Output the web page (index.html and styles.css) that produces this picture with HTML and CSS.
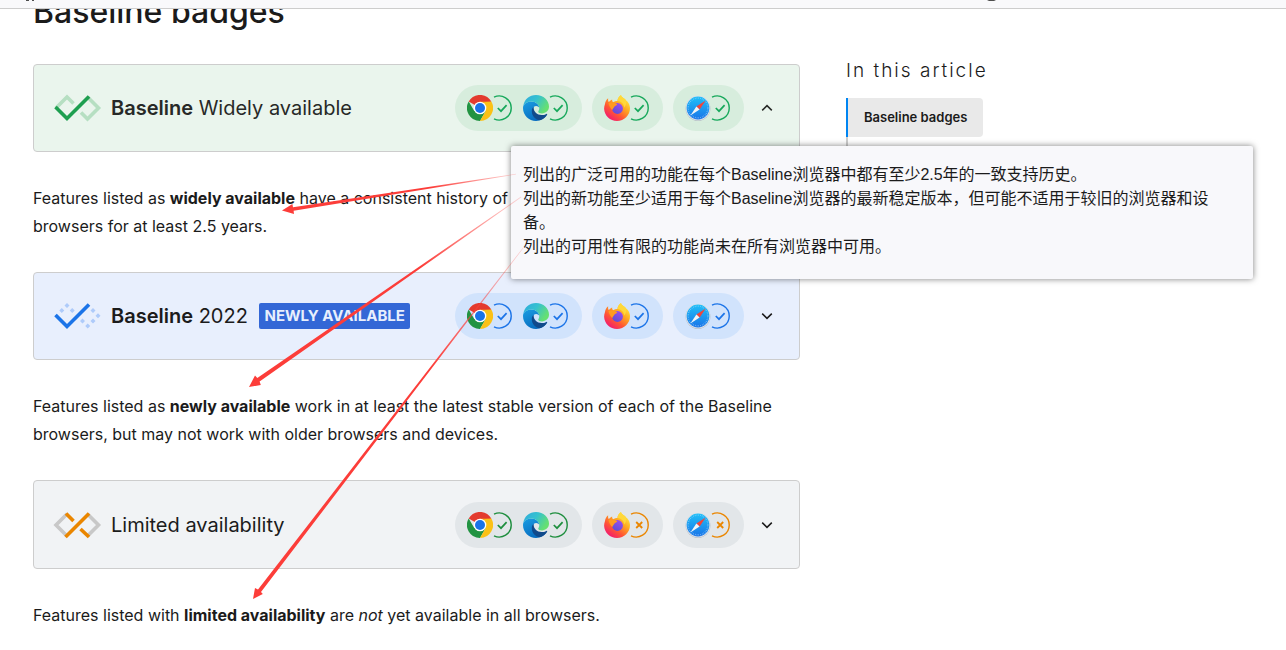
FILE: index.html
```html
<!DOCTYPE html>
<html lang="en">
<head>
    <meta charset="UTF-8">
    <meta name="viewport" content="width=device-width, initial-scale=1.0">
    <title>Baseline badges</title>
    <link rel="stylesheet" href="styles.css">
</head>
<body>
    <svg class="sprite" aria-hidden="true">
        <defs>
            <linearGradient id="edgeTop" x1="0" y1="0" x2="1" y2="0.5">
                <stop offset="0" stop-color="#2faadd"/>
                <stop offset="0.5" stop-color="#35c1d0"/>
                <stop offset="1" stop-color="#66e071"/>
            </linearGradient>
            <linearGradient id="edgeLeft" x1="0" y1="0" x2="0.6" y2="1">
                <stop offset="0" stop-color="#1b9de2"/>
                <stop offset="1" stop-color="#0669bd"/>
            </linearGradient>
            <linearGradient id="foxBody" x1="0.9" y1="0.1" x2="0.2" y2="1">
                <stop offset="0" stop-color="#fff044"/>
                <stop offset="0.35" stop-color="#ffa820"/>
                <stop offset="0.65" stop-color="#ff5634"/>
                <stop offset="1" stop-color="#f0117a"/>
            </linearGradient>
            <linearGradient id="foxGlobe" x1="0.8" y1="0" x2="0.2" y2="1">
                <stop offset="0" stop-color="#a04cf0"/>
                <stop offset="1" stop-color="#5a4fd0"/>
            </linearGradient>
            <linearGradient id="safariDial" x1="0" y1="0" x2="0" y2="1">
                <stop offset="0" stop-color="#1fc0f8"/>
                <stop offset="1" stop-color="#1a74e8"/>
            </linearGradient>
        </defs>

        <symbol id="chrome" viewBox="0 0 26 26">
            <path fill="#e33b2e" d="M13 13 L1.7 6.5 A13 13 0 0 1 24.3 6.5 Z"/>
            <path fill="#229342" d="M13 26 A13 13 0 0 1 1.7 6.5 L7.4 16.2 L13 13 L18.6 16.2 Z"/>
            <path fill="#fbc116" d="M18.6 16.2 L13 26 A13 13 0 0 0 24.3 6.5 H13 Z"/>
            <path fill="#e33b2e" d="M13 6.5 H24.3 L13 7.4 Z"/>
            <circle cx="13" cy="13" r="6.3" fill="#fff"/>
            <circle cx="13" cy="13" r="5" fill="#1a73e8"/>
        </symbol>

        <symbol id="edge" viewBox="0 0 26 26">
            <path fill="url(#edgeLeft)" d="M0 13 C0 9.3 4 6.6 8.4 6.6 C12.8 6.6 16.3 9.6 16.3 13 C15.4 11.2 13 10.4 10.9 11.8 C10 14 10 17 12.5 19.5 C16 22.4 20 22 24 19 C22.5 23 18 26 13 26 C5.8 26 0 20.2 0 13 Z"/>
            <path fill="#114a8b" d="M10.5 12.1 C9.3 13.1 8.8 14.5 8.8 16 C8.8 21.8 13.5 25.6 17.8 25 C20.5 24 23 21.6 24.2 19.4 C24.4 18.9 23.9 18.7 23.5 18.9 C17 22.2 10.4 18.4 10.5 12.1 Z"/>
            <path fill="url(#edgeTop)" d="M0.3 11 C1.2 4.4 6.5 0 13 0 C20.6 0 26 5.5 26 11.6 C26 16 22.6 18.4 19 18.4 C16.5 18.4 15.2 17.5 15.2 16.7 C15.2 16 16.3 15.2 16.3 13 C16.3 9.6 12.8 6.6 8.4 6.6 C4.8 6.6 1.8 8.3 0.3 11 Z"/>
        </symbol>

        <symbol id="firefox" viewBox="0 0 26 26">
            <path fill="url(#foxBody)" d="M24.9 8.8 C24.3 7.4 23.1 5.9 22.1 5.4 C21 3.5 17.5 2.6 17 0 C14.8 1.3 13.5 3.8 13.5 6 C12 6 10.4 6.5 9.3 7.3 C8.3 6.7 8 5.3 8.2 4.4 C6.8 5.1 5.5 6.1 4.8 7 C4 6.2 4 4.2 4.2 3.3 C2.4 4.5 1.3 6.8 1 9 C0.4 10.5 0.1 12.4 0.1 13.8 C0.4 20.7 6.1 26 13 26 C20.2 26 26 20.3 26 13.3 C26 11.8 25.5 10 24.9 8.8 Z"/>
            <circle cx="13.5" cy="13.5" r="5.4" fill="url(#foxGlobe)"/>
            <path fill="#ff9b20" d="M4.5 8 C6.4 6.9 8.2 7 9.5 7.6 C11.1 7.9 11.7 8.9 13.3 9.2 C13 10.7 11.1 10.6 10.5 11.4 C10 12.6 9.1 13.2 8.1 14.9 C6.3 13.1 5 10.9 4.5 8 Z"/>
            <path fill="#ffd83a" d="M17 0 C14.8 1.3 13.5 3.8 13.5 6 C17 6.2 20 8.8 20.2 12.4 C22.3 10.2 22.4 7.6 22.1 5.4 C21 3.5 17.5 2.6 17 0 Z"/>
        </symbol>

        <symbol id="safari" viewBox="0 0 26 26">
            <circle cx="13" cy="13.4" r="12.4" fill="#b4bbc4"/>
            <circle cx="13" cy="13" r="12.2" fill="#e0e5ec"/>
            <circle cx="13" cy="13" r="11.4" fill="url(#safariDial)"/>
            <circle cx="13" cy="13" r="9.9" fill="none" stroke="#9fd3fa" stroke-width="1.2" stroke-dasharray="0.5 1.3"/>
            <path fill="#f0453c" d="M20.7 5.6 L11.4 11.4 L14.6 14.6 Z"/>
            <path fill="#f2f4f7" d="M5.4 20.5 L11.4 11.4 L14.6 14.6 Z"/>
        </symbol>

        <symbol id="yes" viewBox="0 0 21 26">
            <path fill="none" stroke="currentColor" stroke-width="1.4" d="M1 2.2 A12 12 0 1 1 1 23.8"/>
            <path fill="none" stroke="currentColor" stroke-width="1.7" d="M4.8 13 L8 16.2 L13.6 10.2"/>
        </symbol>

        <symbol id="no" viewBox="0 0 21 26">
            <path fill="none" stroke="currentColor" stroke-width="1.4" d="M1 2.2 A12 12 0 1 1 1 23.8"/>
            <path fill="none" stroke="currentColor" stroke-width="1.8" d="M6.2 10 L12.2 16 M12.2 10 L6.2 16"/>
        </symbol>

        <symbol id="chevron" viewBox="0 0 12 12">
            <path fill="none" stroke="currentColor" stroke-width="1.5" d="M1.2 3.6 L6 8.4 L10.8 3.6"/>
        </symbol>
    </svg>

    <header class="topbar">
        <svg width="1000" height="2" aria-hidden="true">
            <path d="M26 0 h3 v1 h-3z M32 0 h2 v1 h-2z M987 0 h9 l-2 1 h-5z"/>
        </svg>
    </header>

    <div class="page">
        <main class="article">
            <h2>Baseline badges</h2>

            <section class="badge high">
                <svg class="mark" viewBox="0 0 46 26" aria-hidden="true">
                    <path class="soft" d="M2 13 L13 2 L19.5 8.5 M27 17.5 L33.5 24 L44.5 13 L33.5 2"/>
                    <path class="strong" d="M1.5 12 L13 23.5 L35 1.5"/>
                </svg>
                <h3><strong>Baseline</strong> Widely available</h3>
                <div class="browsers">
                    <span class="pill">
                        <span class="browser"><svg class="logo"><use href="#chrome"/></svg><svg class="state"><use href="#yes"/></svg></span>
                        <span class="browser"><svg class="logo"><use href="#edge"/></svg><svg class="state"><use href="#yes"/></svg></span>
                    </span>
                    <span class="pill">
                        <span class="browser"><svg class="logo"><use href="#firefox"/></svg><svg class="state"><use href="#yes"/></svg></span>
                    </span>
                    <span class="pill">
                        <span class="browser"><svg class="logo"><use href="#safari"/></svg><svg class="state"><use href="#yes"/></svg></span>
                    </span>
                </div>
                <button class="toggle open" type="button" aria-label="Collapse"><svg><use href="#chevron"/></svg></button>
            </section>
            <p>Features listed as <strong>widely available</strong> have a consistent history of support in each of the Baseline browsers for at least 2.5 years.</p>

            <section class="badge new">
                <svg class="mark" viewBox="0 0 46 26" aria-hidden="true">
                    <path class="dots" d="M13 0 l2.5 2.5 -2.5 2.5 -2.5 -2.5z M7.8 5 l2.5 2.5 -2.5 2.5 -2.5 -2.5z M18.2 5 l2.5 2.5 -2.5 2.5 -2.5 -2.5z M39 5 l2.5 2.5 -2.5 2.5 -2.5 -2.5z M44 10.2 l2.5 2.5 -2.5 2.5 -2.5 -2.5z M39 15.4 l2.5 2.5 -2.5 2.5 -2.5 -2.5z M28.5 15.4 l2.5 2.5 -2.5 2.5 -2.5 -2.5z M33.7 20.6 l2.5 2.5 -2.5 2.5 -2.5 -2.5z"/>
                    <path class="strong" d="M1.5 12 L13 23.5 L35 1.5"/>
                </svg>
                <h3><strong>Baseline</strong> 2022 <span class="tag">Newly available</span></h3>
                <div class="browsers">
                    <span class="pill">
                        <span class="browser"><svg class="logo"><use href="#chrome"/></svg><svg class="state"><use href="#yes"/></svg></span>
                        <span class="browser"><svg class="logo"><use href="#edge"/></svg><svg class="state"><use href="#yes"/></svg></span>
                    </span>
                    <span class="pill">
                        <span class="browser"><svg class="logo"><use href="#firefox"/></svg><svg class="state"><use href="#yes"/></svg></span>
                    </span>
                    <span class="pill">
                        <span class="browser"><svg class="logo"><use href="#safari"/></svg><svg class="state"><use href="#yes"/></svg></span>
                    </span>
                </div>
                <button class="toggle" type="button" aria-label="Expand"><svg><use href="#chevron"/></svg></button>
            </section>
            <p>Features listed as <strong>newly available</strong> work in at least the latest stable version of each of the Baseline browsers, but may not work with older browsers and devices.</p>

            <section class="badge limited">
                <svg class="mark" viewBox="0 0 46 26" aria-hidden="true">
                    <path class="soft" d="M13 2 L2 13 L13 24 M33.5 2 L44.5 13 L33.5 24"/>
                    <path class="strong" d="M12 1.5 L19.5 9 M26.5 17 L35 25 M11.5 25 L35 1.5"/>
                </svg>
                <h3>Limited availability</h3>
                <div class="browsers">
                    <span class="pill">
                        <span class="browser"><svg class="logo"><use href="#chrome"/></svg><svg class="state"><use href="#yes"/></svg></span>
                        <span class="browser"><svg class="logo"><use href="#edge"/></svg><svg class="state"><use href="#yes"/></svg></span>
                    </span>
                    <span class="pill">
                        <span class="browser"><svg class="logo"><use href="#firefox"/></svg><svg class="state missing"><use href="#no"/></svg></span>
                    </span>
                    <span class="pill">
                        <span class="browser"><svg class="logo"><use href="#safari"/></svg><svg class="state missing"><use href="#no"/></svg></span>
                    </span>
                </div>
                <button class="toggle" type="button" aria-label="Expand"><svg><use href="#chevron"/></svg></button>
            </section>
            <p>Features listed with <strong>limited availability</strong> are <em>not</em> yet available in all browsers.</p>
        </main>

        <aside class="toc">
            <h2>In this article</h2>
            <ul>
                <li><a href="#" class="current">Baseline badges</a></li>
            </ul>
        </aside>
    </div>

    <div class="note" lang="zh">
        <p>列出的广泛可用的功能在每个Baseline浏览器中都有至少2.5年的一致支持历史。</p>
        <p>列出的新功能至少适用于每个Baseline浏览器的最新稳定版本，但可能不适用于较旧的浏览器和设备。</p>
        <p>列出的可用性有限的功能尚未在所有浏览器中可用。</p>
    </div>

    <!-- arrows from the note to each badge -->
    <svg class="arrows" width="560" height="640" aria-hidden="true">
        <defs>
            <linearGradient id="fade1" gradientUnits="userSpaceOnUse" x1="516" y1="174" x2="430" y2="187">
                <stop offset="0" stop-color="#fc3d39" stop-opacity="0.2"/>
                <stop offset="1" stop-color="#fc3d39"/>
            </linearGradient>
            <linearGradient id="fade2" gradientUnits="userSpaceOnUse" x1="521" y1="197" x2="420" y2="267">
                <stop offset="0" stop-color="#fc3d39" stop-opacity="0.2"/>
                <stop offset="1" stop-color="#fc3d39"/>
            </linearGradient>
            <linearGradient id="fade3" gradientUnits="userSpaceOnUse" x1="523" y1="248" x2="430" y2="368">
                <stop offset="0" stop-color="#fc3d39" stop-opacity="0.2"/>
                <stop offset="1" stop-color="#fc3d39"/>
            </linearGradient>
        </defs>
        <path fill="url(#fade1)" d="M516 173.8 L293 207.2 L292.4 204 L282 210.5 L294 214 L293.6 210.8 L516 174.4 Z"/>
        <path fill="url(#fade2)" d="M521 196.6 L257.3 378 L255 375.6 L249 387 L260.8 385 L259.6 381.6 L521.4 197.2 Z"/>
        <path fill="url(#fade3)" d="M523 247.6 L258 589.5 L255 588 L253 599 L262.8 594 L261 592 L523.5 248 Z"/>
    </svg>
</body>
</html>
```
FILE: styles.css
```css
body {
    margin: 0;
    font-family: Inter, "Liberation Sans", sans-serif;
    font-size: 16px;
    line-height: 28px;
    color: #1b1b1b;
    background-color: #fff;
    overflow-y: hidden;
}

h2, h3, p, ul {
    margin: 0;
    padding: 0;
}

strong {
    font-weight: 600;
}

.sprite {
    position: absolute;
    width: 0;
    height: 0;
}

.topbar {
    position: fixed;
    top: 0;
    left: 0;
    right: 0;
    height: 8px;
    background-color: #f9f9fb;
    border-bottom: 1px solid #cdcdcd;
    z-index: 1;
}

.topbar svg {
    display: block;
    fill: #4e4e4e;
}

.page {
    display: grid;
    grid-template-columns: minmax(0, 767fr) minmax(0, 407fr);
    column-gap: 46px;
    padding: 0 33px;
}

.article h2 {
    font-size: 32px;
    font-weight: 500;
    line-height: 24px;
    margin-bottom: 40px;
}

.article p {
    padding: 32px 0;
}

.article p strong {
    font-weight: 700;
}

.badge {
    display: flex;
    align-items: center;
    box-sizing: border-box;
    min-height: 88px;
    padding: 20px;
    border: 1px solid #cdcdcd;
    border-radius: 4px;
}

.badge h3 {
    font-size: 20px;
    font-weight: 400;
    margin-left: 11px;
}

.mark {
    width: 46px;
    height: 26px;
    overflow: visible;
}

.mark path {
    fill: none;
    stroke-width: 3.6;
}

.high {
    background-color: #eaf5ed;
    color: #272927;
    --strong: #1e9f50;
    --soft: #b6dfc2;
    --pill: #d7eddd;
    --state: #17a85b;
}

.new {
    background-color: #e8effd;
    --strong: #1b74e8;
    --soft: #aecbfa;
    --pill: #d1e3fc;
    --state: #1b74e8;
}

.limited {
    min-height: 89px;
    background-color: #f1f3f5;
    --strong: #ea8600;
    --soft: #c8c8c8;
    --pill: #e2e6e9;
    --state: #1e8e3e;
}

.mark .strong {
    stroke: var(--strong);
}

.mark .soft {
    stroke: var(--soft);
}

.mark .dots {
    fill: var(--soft);
}

.tag {
    display: inline-block;
    margin-left: 6px;
    padding: 0 5px;
    border-radius: 2px;
    background-color: #3367d6;
    color: #e8effd;
    font-size: 15px;
    font-weight: 700;
    line-height: 26px;
    text-transform: uppercase;
    vertical-align: 2px;
}

.browsers {
    display: flex;
    gap: 10px;
    margin-left: auto;
}

.pill {
    display: flex;
    gap: 9px;
    padding: 10px 12px;
    border-radius: 23px;
    background-color: var(--pill);
}

.browser {
    display: flex;
}

.logo {
    width: 26px;
    height: 26px;
}

.state {
    width: 21px;
    height: 26px;
    color: var(--state);
}

.missing {
    color: #ea8600;
}

.toggle {
    display: flex;
    margin-left: 11px;
    padding: 6px;
    border: none;
    background: none;
    color: inherit;
    cursor: pointer;
}

.toggle svg {
    width: 12px;
    height: 12px;
}

.toggle.open svg {
    transform: rotate(180deg);
}

.toc {
    padding-top: 57px;
}

.toc h2 {
    font-size: 19px;
    font-weight: 300;
    letter-spacing: 2px;
    margin-bottom: 13px;
}

.toc ul {
    list-style: none;
    min-height: 80px;
    border-left: 2px solid #cdcdcd;
}

.toc li {
    display: flex;
}

.toc a {
    margin-left: -2px;
    padding: 8px 16px;
    border-left: 2px solid #0085f2;
    border-radius: 0 4px 4px 0;
    background-color: #e9e9e9;
    color: inherit;
    font-size: 13px;
    font-weight: 600;
    line-height: 23px;
    text-decoration: none;
}

.arrows {
    position: absolute;
    top: 0;
    left: 0;
    pointer-events: none;
}

.note {
    position: absolute;
    top: 146px;
    left: 511px;
    right: 33px;
    box-sizing: border-box;
    padding: 17px 30px 20px 12px;
    border-radius: 2px;
    background-color: #f8f8fb;
    box-shadow: 0 0 6px rgba(0, 0, 0, 0.5);
    font-family: "Liberation Sans", "Noto Sans CJK SC", sans-serif;
    font-size: 16px;
    line-height: 24px;
}
```
